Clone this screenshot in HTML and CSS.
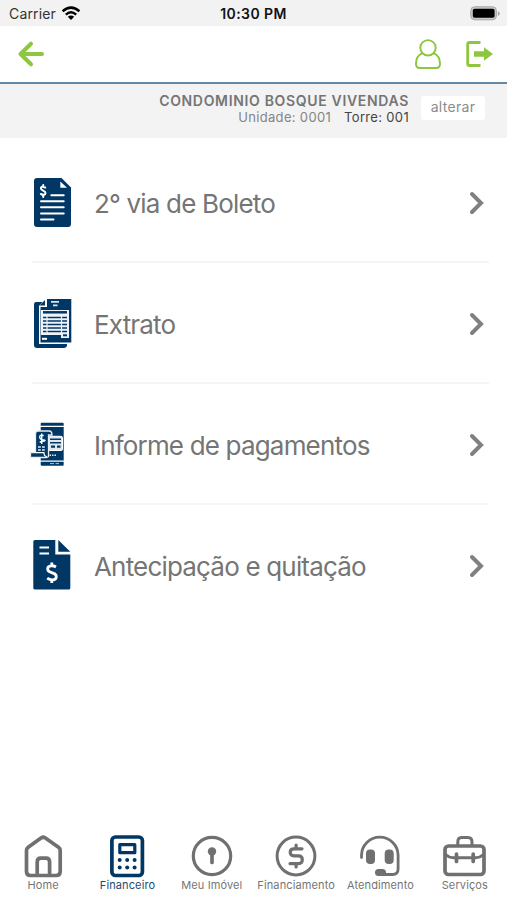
FILE: index.html
```html
<!DOCTYPE html>
<html lang="pt-BR">
<head>
<meta charset="utf-8">
<meta name="viewport" content="width=device-width, initial-scale=1">
<title>Financeiro</title>
<link rel="stylesheet" href="styles.css">
</head>
<body>
<div class="status">
  <div class="carrier"><span>Carrier</span>
    <svg width="20" height="15" viewBox="0 0 20 15"><g fill="none" stroke="#000" stroke-width="2.5"><path d="M1.6 5.2Q10-2 18.4 5.2"/><path d="M4.8 8.6Q10 4 15.2 8.6"/></g><path d="M10 14L6.8 10.8Q10 8.2 13.2 10.8Z"/></svg>
  </div>
  <span class="clock">10:30 PM</span>
  <svg class="battery" width="30" height="15" viewBox="0 0 30 15"><rect x=".8" y=".8" width="25.6" height="13" rx="3.8" fill="#c9c9c9" stroke="#a6a6a6"/><rect x="2.8" y="2.8" width="21.8" height="9" rx="1.8"/><path d="M27.8 5v5q2-1 2-2.5T27.8 5z" fill="#a6a6a6"/></svg>
</div>
<header class="header">
  <svg width="28" height="28" viewBox="0 0 28 28" fill="none" stroke="#8dc63f" stroke-width="4" stroke-linecap="round" stroke-linejoin="round"><path d="M15 3.700L4.500 14L15 24.300M5.500 14H26"/></svg>
  <div class="actions">
    <svg width="28" height="32" viewBox="0 0 28 32" fill="none" stroke="#8dc63f" stroke-width="1.900"><circle cx="14" cy="9.800" r="7.700"/><path d="M8.500 15.200C4 17 2 21 2 26Q2 30 6 30H22Q26 30 26 26C26 21 24 17 19.500 15.200"/></svg>
    <svg width="28" height="28" viewBox="0 0 28 28"><path d="M15.500 2.500H4.500Q2.700 2.500 2.700 4.300V23.700Q2.700 25.500 4.500 25.500H15.500" fill="none" stroke="#8dc63f" stroke-width="2.800"/><path d="M9 11.200H19V7.200L28 14L19 20.800V16.800H9Z" fill="#8dc63f"/></svg>
  </div>
</header>
<section class="unit">
  <div class="unit-text">
    <div class="condo">CONDOMINIO BOSQUE VIVENDAS</div>
    <div class="detail"><span>Unidade: 0001</span><span class="tower">Torre: 001</span></div>
  </div>
  <button class="change">alterar</button>
</section>
<main class="list">
  <a class="row">
    <svg class="icon" viewBox="0 0 44 53"><path d="M7 2H31.500L41 11.500V48Q41 51 38 51H7Q4 51 4 48V5Q4 2 7 2Z" fill="#003764"/><path d="M30.300 5.500V11.700H37Z" fill="#fff"/><g fill="none" stroke="#fff" stroke-width="2" stroke-linecap="round"><path d="M21.300 19.200H33.700M11 25.200H33.700M11 31.300H33.700M11 37.400H33.700M11 43.600H23.500"/><path d="M15.200 11.500Q11 9.500 10.900 12.400C10.800 14.800 15.500 14.400 15.500 17Q15.400 20 10.800 18M13.200 9V10.500M13.200 19.200V21"/></g></svg>
    <span class="name">2° via de Boleto</span>
    <svg class="chev" viewBox="0 0 16 24"><path d="M3 3L12 12L3 21"/></svg>
  </a>
  <a class="row">
    <svg class="icon" viewBox="0 0 44 53"><path d="M6 5H30V47H37V49Q36 51 34 51H7Q4 51 4 48V8Q4 5 6 5Z" fill="#003764"/><path d="M16 1H42.500V47H9V9Z" fill="#fff"/><path d="M17 2H41.300V45.500H10.500V10H17Z" fill="#003764"/><path d="M9.500 8.500L15 3V8.500Z" fill="#003764"/><path d="M21 4.800H29M23 8.300H27.500" stroke="#dbe4ed" stroke-width="1.700"/><path d="M11 13H39V41H31V38H11Z" fill="#eef3f8"/><path d="M13 15.300H37" stroke="#003764" stroke-width="2.500"/><path d="M13 20.500H37M13 24H37M13 27.500H37M13 31H37M13 34.500H37" stroke="#003764" stroke-width="1.600"/><path d="M17 18.500V36.500M31.500 18.500V38" stroke="#eef3f8" stroke-width="1.200"/><path d="M33 38.300H37" stroke="#003764" stroke-width="2"/><path d="M12 41.800H17" stroke="#fff" stroke-width="2"/></svg>
    <span class="name">Extrato</span>
    <svg class="chev" viewBox="0 0 16 24"><path d="M3 3L12 12L3 21"/></svg>
  </a>
  <a class="row">
    <svg class="icon" viewBox="0 0 44 53"><rect x="10.700" y="4.700" width="23" height="43" rx="1" fill="#003764"/><path d="M10 8.300H34M10 43.200H34" stroke="#fff" stroke-width="1.200"/><path d="M20 45.600H24M25.500 45.600H29" stroke="#afc3d5"/><rect x="18" y="18.300" width="14.500" height="14.200" rx="1.500" fill="#dce7f0" stroke="#fff"/><path d="M20 21.300H31M20 24.700H31" stroke="#003764" stroke-width="1.500"/><path d="M21 28.700H25M27 28.700H30.500" stroke="#003764" stroke-width="2.300"/><path d="M8 13H19Q22 13 22 17H18.500V38.500Q18 39.500 16 39.500H.500V34.500H5.500V16Q5.500 13 8 13Z" fill="#003764" stroke="#e7eef4" stroke-width="1.300"/><path d="M6 34.700H14Q14 38.500 17 38.500" fill="none" stroke="#fff" stroke-width="1.200"/><path d="M13.700 17.500Q9.700 16.500 9.700 19T13.700 22T9.700 24M11.700 15.500V26" fill="none" stroke="#fff" stroke-width="1.400"/><path d="M8 29H15M8 32H15" stroke="#e5edf4" stroke-width="1.500" stroke-dasharray="2.800 1.200"/><path d="M19.500 37.300H27" stroke="#e5edf4" stroke-width="1.500" stroke-dasharray="1.500 1"/></svg>
    <span class="name">Informe de pagamentos</span>
    <svg class="chev" viewBox="0 0 16 24"><path d="M3 3L12 12L3 21"/></svg>
  </a>
  <a class="row">
    <svg class="icon" viewBox="0 0 44 53"><path d="M5 1H25.300V15.500H40.300V49Q40.300 50.500 38.800 50.500H5Q3.300 50.500 3.300 49V2.500Q3.300 1 5 1ZM28.300 1L40.300 12.800H28.300Z" fill="#003764"/><path d="M9.500 8.500H19M9.500 14.500H19" stroke="#fff" stroke-width="2.200"/><path d="M26 28Q23.500 26.500 21 26.800C16.500 27.200 16.800 32.300 20.500 33.200C24 34.200 26.700 34.800 26.300 38C25.800 41.700 20.500 41.500 17.200 39.200M21.800 23.500V27M21.800 40.500V44" fill="none" stroke="#fff" stroke-width="2.800"/></svg>
    <span class="name">Antecipação e quitação</span>
    <svg class="chev" viewBox="0 0 16 24"><path d="M3 3L12 12L3 21"/></svg>
  </a>
</main>
<nav class="tabs">
  <a class="tab"><svg viewBox="0 0 44 44"><path d="M20 4Q22.200 2.500 24.400 4L37.500 13.200Q39.200 14.500 39.200 16.500V37.500Q39.200 41.500 35.200 41.500H9.500Q5.500 41.500 5.500 37.500V16.500Q5.500 14.500 7.200 13.200Z"/><path d="M16.200 41V28Q16.200 24.200 19.800 24.200H25Q28.600 24.200 28.600 28V41"/></svg><span>Home</span></a>
  <a class="tab active"><svg viewBox="0 0 44 44"><rect x="6.900" y="3" width="30.500" height="38.500" rx="3.500"/><rect x="14.800" y="10.700" width="15" height="8" stroke-width="3.200"/><g class="solid"><circle cx="14.700" cy="26" r="2"/><circle cx="22.200" cy="26" r="2"/><circle cx="29.600" cy="26" r="2"/><circle cx="14.700" cy="33.600" r="2"/><circle cx="22.200" cy="33.600" r="2"/><circle cx="29.600" cy="33.600" r="2"/></g></svg><span>Financeiro</span></a>
  <a class="tab"><svg viewBox="0 0 44 44"><circle cx="22" cy="22" r="18.700" stroke-width="3.200"/><circle class="solid" cx="22" cy="17.500" r="4.200"/><path d="M22 18V28.500"/></svg><span>Meu Imóvel</span></a>
  <a class="tab"><svg viewBox="0 0 44 44"><circle cx="22" cy="22" r="18.900" stroke-width="3"/><path d="M28 14.800H20Q16.200 14.800 16.200 18.300T20 21.900H24.500Q28.300 21.900 28.300 25.800T24.500 29.600H16M22.100 11V14.500M22.100 30V33" stroke-width="3.200"/></svg><span>Financiamento</span></a>
  <a class="tab"><svg viewBox="0 0 44 44"><path d="M3.500 23.500V21.500A18.300 18.300 0 0 1 40.100 21.500V35Q40.100 40.500 34.600 40.500H25" stroke-width="2.800"/><rect class="solid" x="8" y="15.500" width="9" height="14.500" rx="4"/><rect class="solid" x="26.700" y="15.500" width="9" height="14.500" rx="4"/><rect class="solid" x="17" y="35" width="11" height="7" rx="3.500"/></svg><span>Atendimento</span></a>
  <a class="tab"><svg viewBox="0 0 44 44"><rect x="2" y="12" width="39" height="28.500" rx="3.500"/><path d="M14.800 11.500V8Q14.800 3.500 18.500 3.500H25Q29 3.500 29 8V11.500M2.500 20.500Q6 23.700 10.500 23.700H32.500Q37 23.700 40.500 20.500" stroke-width="3"/><path d="M13.500 20V27.500M30.200 20V27.500"/></svg><span>Serviços</span></a>
</nav>
</body>
</html>
```
FILE: styles.css
```css
* { box-sizing: border-box; }
body {
  margin: 0;
  height: 900px;
  display: flex;
  flex-direction: column;
  background: #fff;
  font-family: Inter, "Liberation Sans", sans-serif;
  color: #757575;
  overflow: hidden;
}
svg { display: block; flex: none; }
.status {
  height: 26px;
  background: #f2f2f2;
  display: grid;
  grid-template-columns: 1fr auto 1fr;
  align-items: center;
  padding: 1px 7px 0 9px;
  color: #111;
}
.carrier { display: flex; align-items: center; gap: 5px; font-size: 14px; letter-spacing: .15px; color: #333; }
.clock { font-size: 14px; font-weight: 600; letter-spacing: .4px; margin-left: -2px; }
.battery { justify-self: end; }
.header {
  height: 58px;
  border-bottom: 2px solid #6289a8;
  display: flex;
  align-items: center;
  justify-content: space-between;
  padding: 0 14px 0 16px;
}
.actions { display: flex; align-items: center; gap: 23px; }
.unit {
  height: 54px;
  background: #f3f3f3;
  display: flex;
  justify-content: flex-end;
  padding: 8px 22px 0 0;
  gap: 12px;
}
.unit-text { text-align: right; line-height: 17px; white-space: nowrap; }
.condo { font-size: 14px; font-weight: 600; letter-spacing: .67px; }
.detail { font-size: 13px; letter-spacing: .33px; color: #858585; display: flex; justify-content: flex-end; gap: 13px; }
.tower { color: #444; }
.change {
  width: 64px;
  height: 24px;
  margin-top: 4px;
  padding: 0 0 3px;
  border: 0;
  border-radius: 3px;
  background: #fff;
  color: #8c8c8c;
  font: 14px Inter, sans-serif;
  letter-spacing: .3px;
}
.list { flex: 1; padding: 4px 18px 0 30px; }
.row { height: 121px; display: flex; align-items: center; position: relative; }
.row:not(:last-child)::after {
  content: "";
  position: absolute;
  left: 2px;
  right: 0;
  bottom: 0;
  height: 2px;
  background: #f5f5f5;
}
.icon { width: 44px; height: 53px; }
.name { flex: 1; margin-left: 20px; padding-top: 2px; font-size: 26px; letter-spacing: -.82px; white-space: nowrap; }
.chev { width: 16px; height: 24px; margin-right: 4px; fill: none; stroke: #808080; stroke-width: 4; stroke-linecap: round; }
.tabs { height: 66px; padding-left: 1px; display: grid; grid-template-columns: repeat(6, 1fr); }
.tab { display: flex; flex-direction: column; align-items: center; color: #757575; font-size: 11px; letter-spacing: .12px; line-height: 14px; white-space: nowrap; }
.tab svg { width: 44px; height: 44px; fill: none; stroke: #707070; stroke-width: 3.7; stroke-linecap: round; stroke-linejoin: round; }
.tab .solid { fill: #707070; stroke: none; }
.tab.active { color: #1c4a76; }
.tab.active svg { stroke: #003764; }
.tab.active .solid { fill: #003764; }
```
